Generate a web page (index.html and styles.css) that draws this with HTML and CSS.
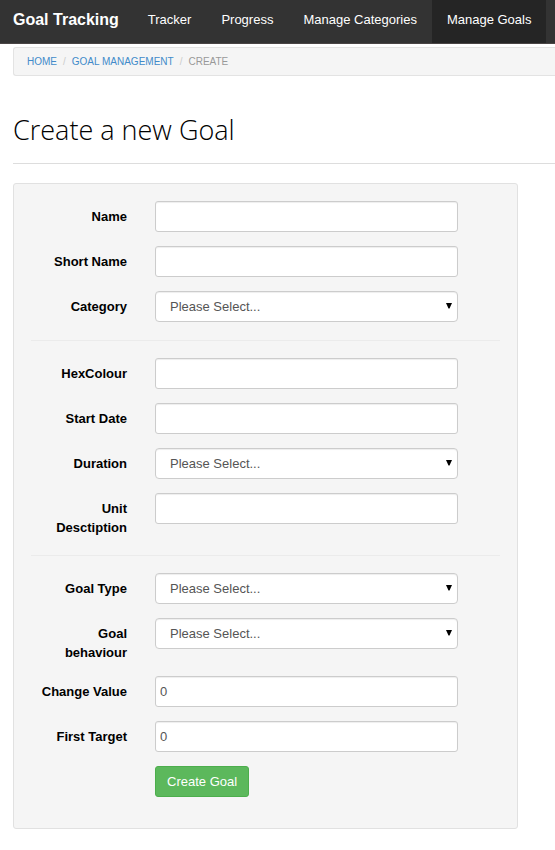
FILE: index.html
```html
<!DOCTYPE html>
<html lang="en">
<head>
<meta charset="utf-8">
<meta name="viewport" content="width=device-width, initial-scale=1">
<title>Create a new Goal</title>
<link rel="stylesheet" href="styles.css">
</head>
<body>
<nav class="navbar">
  <a class="brand" href="#">Goal Tracking</a>
  <a class="nav-link" href="#">Tracker</a>
  <a class="nav-link" href="#">Progress</a>
  <a class="nav-link" href="#">Manage Categories</a>
  <a class="nav-link active" href="#">Manage Goals</a>
</nav>
<main class="page">
  <ol class="breadcrumb">
    <li><a href="#">Home</a></li>
    <li><a href="#">Goal Management</a></li>
    <li>Create</li>
  </ol>
  <h1 class="title">Create a new Goal</h1>
  <form class="panel">
    <div class="group">
      <div class="row"><label for="name">Name</label><input class="field" id="name" type="text"></div>
      <div class="row"><label for="short">Short Name</label><input class="field" id="short" type="text"></div>
      <div class="row"><label for="category">Category</label><div class="select"><select class="field" id="category"><option>Please Select...</option></select><svg class="arrow" viewBox="0 0 6 6"><path d="M0 0h6L3.5 5.5h-1z"/></svg></div></div>
    </div>
    <hr class="divider">
    <div class="group">
      <div class="row"><label for="hex">HexColour</label><input class="field" id="hex" type="text"></div>
      <div class="row"><label for="start">Start Date</label><input class="field" id="start" type="text"></div>
      <div class="row"><label for="duration">Duration</label><div class="select"><select class="field" id="duration"><option>Please Select...</option></select><svg class="arrow" viewBox="0 0 6 6"><path d="M0 0h6L3.5 5.5h-1z"/></svg></div></div>
      <div class="row"><label for="unit">Unit Desctiption</label><input class="field" id="unit" type="text"></div>
    </div>
    <hr class="divider">
    <div class="group">
      <div class="row"><label for="type">Goal Type</label><div class="select"><select class="field" id="type"><option>Please Select...</option></select><svg class="arrow" viewBox="0 0 6 6"><path d="M0 0h6L3.5 5.5h-1z"/></svg></div></div>
      <div class="row"><label for="behaviour">Goal behaviour</label><div class="select"><select class="field" id="behaviour"><option>Please Select...</option></select><svg class="arrow" viewBox="0 0 6 6"><path d="M0 0h6L3.5 5.5h-1z"/></svg></div></div>
      <div class="row"><label for="change">Change Value</label><input class="field" id="change" type="text" value="0"></div>
      <div class="row"><label for="target">First Target</label><input class="field" id="target" type="text" value="0"></div>
      <div class="row"><button class="submit" type="submit">Create Goal</button></div>
    </div>
  </form>
</main>
</body>
</html>
```
FILE: styles.css
```css
* {
  box-sizing: border-box;
}

body {
  margin: 0;
  background: #fff;
  color: #000;
  font: 13px/19px "Liberation Sans", Arial, sans-serif;
  overflow-x: hidden;
}

.navbar {
  display: flex;
  height: 44px;
  background: #333;
  border-bottom: 1px solid #4a4545;
  white-space: nowrap;
}

.brand,
.nav-link {
  padding: 10px 15px;
  color: #fff;
  text-decoration: none;
}

.brand {
  padding: 10px 14px 10px 13px;
  font-size: 16px;
  font-weight: bold;
}

.active {
  background: #252525;
}

.page {
  padding: 3px 0 20px 13px;
}

.breadcrumb {
  display: flex;
  margin: 0;
  padding: 4px 13px;
  list-style: none;
  background: #f5f5f5;
  border: 1px solid #e3e3e3;
  border-right: 0;
  border-radius: 3px 0 0 3px;
  color: #999;
  font-size: 10px;
  text-transform: uppercase;
}

.breadcrumb li + li::before {
  content: "/";
  padding: 0 6px;
  color: #ccc;
}

.breadcrumb a {
  color: #428bca;
  text-decoration: none;
}

.title {
  margin: 35px 0 19px;
  padding-bottom: 14px;
  border-bottom: 1px solid #ddd;
  font: 300 27px/38px "Open Sans", sans-serif;
}

.panel {
  max-width: 505px;
  padding: 17px 17px 31px;
  background: #f5f5f5;
  border: 1px solid #e1e1e1;
  border-radius: 3px;
}

.group {
  display: grid;
  gap: 14px;
}

.row {
  display: grid;
  grid-template-columns: 96px minmax(0, 1fr);
  column-gap: 28px;
  align-items: start;
  padding-right: 42px;
}

label {
  padding: 6px 0 0 6px;
  font-weight: bold;
  text-align: right;
}

.field {
  display: block;
  width: 100%;
  height: 31px;
  margin: 0;
  padding: 0 4px;
  background: #fff;
  border: 1px solid #ccc;
  border-radius: 3px;
  box-shadow: inset 0 1px 1px rgba(0, 0, 0, 0.07);
  color: #555;
  font: inherit;
}

.select {
  position: relative;
}

select.field {
  appearance: none;
  padding: 0 14px;
  border-radius: 4px;
}

.arrow {
  position: absolute;
  top: 12px;
  right: 6px;
  width: 6px;
  height: 6px;
  pointer-events: none;
}

.divider {
  height: 1px;
  margin: 18px 0 17px;
  border: 0;
  background: #ebebeb;
}

.submit {
  grid-column: 2;
  justify-self: start;
  height: 31px;
  padding: 0 11px;
  background: #5cb85c;
  border: 1px solid #4cae4c;
  border-radius: 3px;
  color: #fff;
  font: inherit;
}
```
